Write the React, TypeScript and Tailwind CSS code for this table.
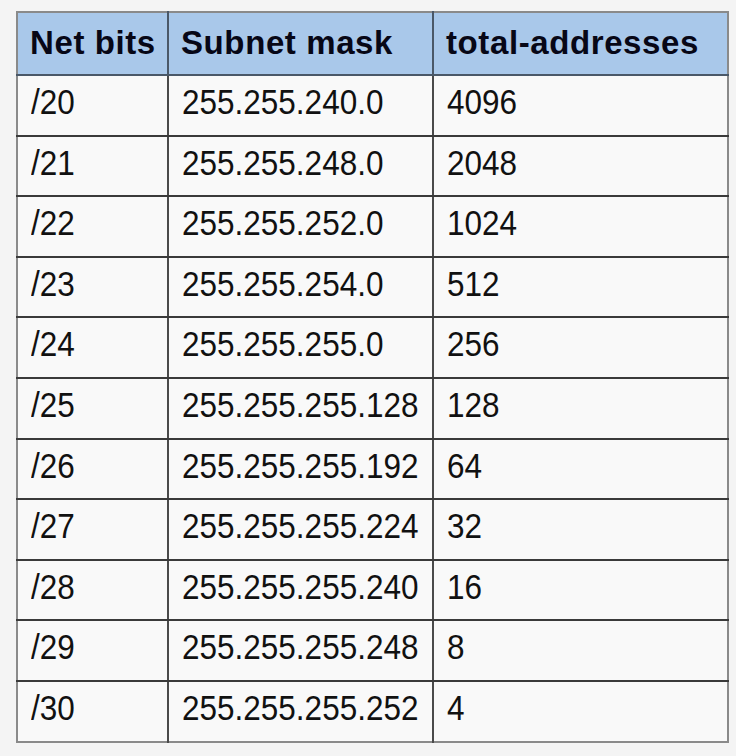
import React from "react";

const rows: [string, string, string][] = [
  ["/20", "255.255.240.0", "4096"],
  ["/21", "255.255.248.0", "2048"],
  ["/22", "255.255.252.0", "1024"],
  ["/23", "255.255.254.0", "512"],
  ["/24", "255.255.255.0", "256"],
  ["/25", "255.255.255.128", "128"],
  ["/26", "255.255.255.192", "64"],
  ["/27", "255.255.255.224", "32"],
  ["/28", "255.255.255.240", "16"],
  ["/29", "255.255.255.248", "8"],
  ["/30", "255.255.255.252", "4"],
];

export default function App() {
  return (
    <div
      className="w-[736px] h-[756px] bg-[#f4f4f4] pt-[11px] pl-[16px]"
      style={{ fontFamily: '"Liberation Sans", Arial, sans-serif' }}
    >
      <table className="border-collapse border-2 border-[#8a8a8a] w-[711px] table-fixed">
        <colgroup>
          <col className="w-[151px]" />
          <col className="w-[265px]" />
          <col className="w-[295px]" />
        </colgroup>
        <thead>
          <tr className="h-[63px] bg-[#a9c8ea]">
            {["Net bits", "Subnet mask", "total-addresses"].map((h, i) => (
              <th
                key={h}
                className={`text-left align-middle pl-[12px] pb-[3px] text-[33px] font-bold tracking-[0.6px] text-[#070716] leading-none border-b-2 border-b-[#4a5868] ${
                  i > 0 ? "border-l-2 border-l-[#4a5868]" : ""
                }`}
              >
                {h}
              </th>
            ))}
          </tr>
        </thead>
        <tbody>
          {rows.map((r, ri) => (
            <tr key={ri} className="h-[60.6px] bg-[#f9f9f9]">
              {r.map((c, ci) => (
                <td
                  key={ci}
                  className={`align-middle pl-[13px] pb-[5px] text-[31.5px] text-[#111] leading-none ${
                    ri < rows.length - 1 ? "border-b-2 border-b-[#3a3a3a]" : ""
                  } ${ci > 0 ? "border-l-2 border-l-[#4a4a4a]" : ""}`}
                >
                  <span className="inline-block scale-y-110">{c}</span>
                </td>
              ))}
            </tr>
          ))}
        </tbody>
      </table>
    </div>
  );
}
